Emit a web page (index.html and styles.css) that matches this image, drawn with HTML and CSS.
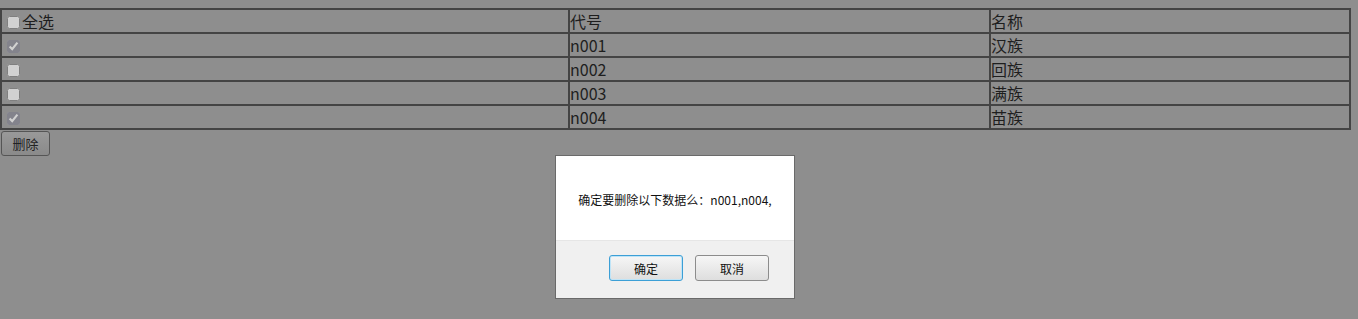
FILE: index.html
```html
<!DOCTYPE html>
<html lang="zh-CN">
  <head>
    <meta charset="UTF-8" />
    <title>删除</title>
    <link rel="stylesheet" href="styles.css">
  </head>
  <body>
    <table class="grid">
      <tr>
        <td class="c1"><input type="checkbox" />全选</td>
        <td class="c2">代号</td>
        <td class="c3">名称</td>
      </tr>
      <tr>
        <td><input type="checkbox" checked /></td>
        <td>n001</td>
        <td>汉族</td>
      </tr>
      <tr>
        <td><input type="checkbox" /></td>
        <td>n002</td>
        <td>回族</td>
      </tr>
      <tr>
        <td><input type="checkbox" /></td>
        <td>n003</td>
        <td>满族</td>
      </tr>
      <tr>
        <td><input type="checkbox" checked /></td>
        <td>n004</td>
        <td>苗族</td>
      </tr>
    </table>
    <button class="del">删除</button>

    <div class="dialog">
      <div class="msg">确定要删除以下数据么：n001,n004,</div>
      <div class="actions">
        <button class="btn ok">确定</button>
        <button class="btn">取消</button>
      </div>
    </div>
  </body>
</html>
```

FILE: styles.css
```css
body {
  margin: 0;
  background: #8e8e8e;
  font-family: "Noto Sans CJK SC", "Liberation Sans", sans-serif;
  color: #222;
  height: 319px;
  overflow: hidden;
  position: relative;
}

.grid {
  margin-top: 8px;
  width: 1351px;
  border-collapse: collapse;
  font-size: 16px;
}

.grid td {
  border: 2px solid #444;
  height: 22px;
  padding: 0;
  line-height: 20px;
  vertical-align: middle;
  color: #1e1e1e;
}

.c1 {
  width: 566px;
}

.c2 {
  width: 419px;
}

.grid input {
  width: 13px;
  height: 13px;
  margin: 0 2px 0 5px;
  vertical-align: -1px;
  accent-color: #7d7d8c;
  opacity: 0.6;
}

.del {
  display: block;
  margin: 1px 0 0 1px;
  width: 49px;
  height: 25px;
  font-family: inherit;
  font-size: 13px;
  color: #222;
  background: linear-gradient(#999, #8a8a8a);
  border: 1px solid #555;
  border-radius: 3px;
  padding: 0;
}

.dialog {
  position: absolute;
  left: 555px;
  top: 155px;
  width: 238px;
  height: 142px;
  background: #fff;
  border: 1px solid #6a6a6a;
  display: flex;
  flex-direction: column;
}

.msg {
  height: 84px;
  display: flex;
  align-items: center;
  justify-content: center;
  font-size: 12px;
  color: #111;
  padding-top: 2px;
  box-sizing: border-box;
}

.actions {
  flex: 1;
  background: #f0f0f0;
  border-top: 1px solid #e6e6e6;
  display: flex;
  justify-content: flex-end;
  gap: 12px;
  padding: 14px 25px 0 0;
  align-items: flex-start;
}

.btn {
  width: 74px;
  height: 26px;
  font-family: inherit;
  font-size: 12px;
  color: #111;
  background: linear-gradient(#f6f6f6, #dedede);
  border: 1px solid #8c8c8c;
  border-radius: 3px;
  padding: 0;
}

.btn.ok {
  border-color: #3c9fd6;
  box-shadow: inset 0 0 0 1px #bfe4f7;
}
```
